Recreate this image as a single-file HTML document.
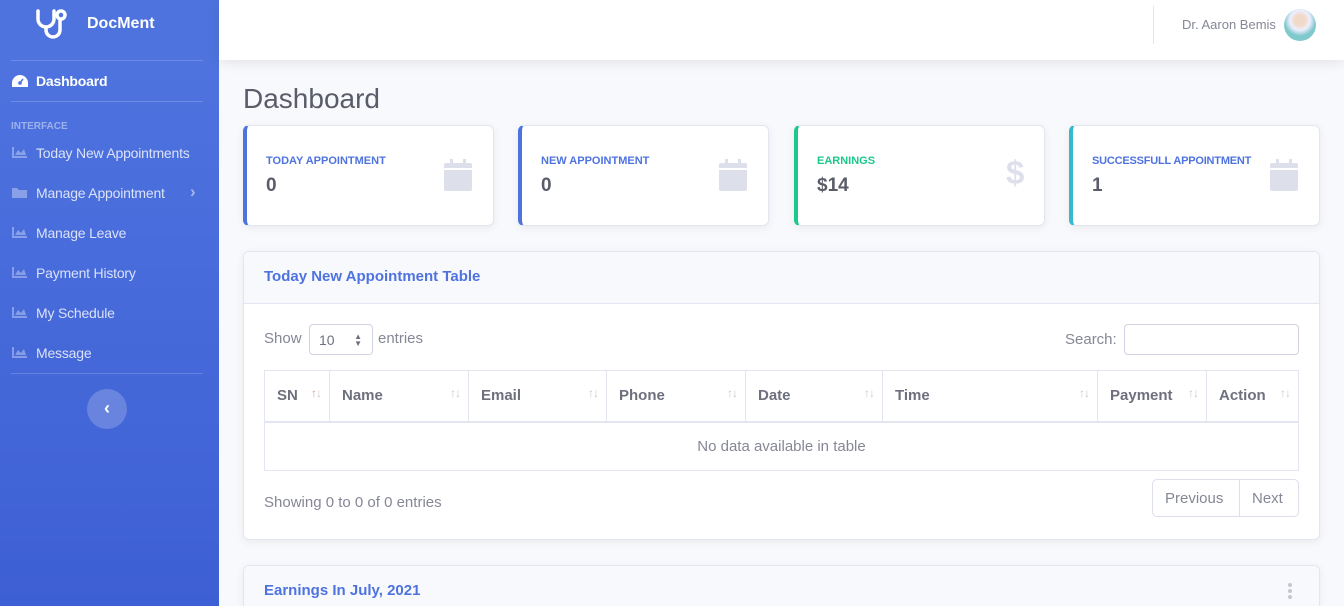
<!DOCTYPE html>
<html style="overflow:hidden;height:606px"><head><meta charset="utf-8"><style>
*{box-sizing:border-box;margin:0;padding:0}
body{width:1344px;height:606px;overflow:hidden;font-family:"Liberation Sans",sans-serif;background:#f8f9fc;position:relative;color:#858796}
.sb{position:absolute;left:0;top:0;width:219px;height:606px;background:linear-gradient(180deg,#4e73df 10%,#3d5fd4 100%)}
.a{position:absolute}
.hr{position:absolute;left:11px;width:192px;height:1px;background:rgba(255,255,255,.18)}
.it{position:absolute;left:36px;font-size:14px;color:rgba(255,255,255,.8);letter-spacing:-0.2px}
.ic{position:absolute;left:12px;width:15px;height:11px}
.top{position:absolute;left:219px;top:0;right:0;height:60px;background:#fff;box-shadow:0 2px 12px rgba(58,59,69,.12)}
.card{position:absolute;top:125px;width:251px;height:101px;background:#fff;border-radius:6px;border:1px solid #e3e6f0;box-shadow:0 2px 8px rgba(58,59,69,.08)}
.card .lab{position:absolute;left:19px;top:29px;font-size:11px;font-weight:bold;text-transform:uppercase}
.card .val{position:absolute;left:19px;top:49px;font-size:19px;font-weight:bold;color:#5a5c69}
.cal{position:absolute;left:197px;top:33px}
.box{position:absolute;left:243px;width:1077px;background:#fff;border:1px solid #e3e6f0;border-radius:6px;box-shadow:0 2px 8px rgba(58,59,69,.08);overflow:hidden}
.bh{height:52px;background:#f8f9fc;border-bottom:1px solid #e3e6f0;padding:16px 20px;font-size:15px;font-weight:bold;color:#4e73df}
th{font-size:15px;color:#6e707e;text-align:left;font-weight:bold;padding-left:12px;border-right:1px solid #e3e6f0;position:relative}
th span{position:absolute;right:8px;top:15px;font-size:12px;color:#c8cad4;font-weight:normal;letter-spacing:-1px}
</style></head><body>
<div class="sb">
 <svg class="a" style="left:35px;top:8px" width="36" height="32" viewBox="0 0 36 32" fill="none" stroke="#fff" stroke-width="3.5" stroke-linecap="round"><path d="M3 3v8a8 8 0 0 0 16 0V3"/><path d="M11 19v3a7 7 0 0 0 14 0V12"/><circle cx="26" cy="7" r="4"/></svg>
 <div class="a" style="left:87px;top:15px;font-size:16px;font-weight:bold;color:#fff">DocMent</div>
 <div class="hr" style="top:60px"></div>
 <svg class="a" style="left:12px;top:75px" width="16" height="12" viewBox="0 0 16 12"><path d="M8 0a8 8 0 0 0-8 8v4h16V8A8 8 0 0 0 8 0z" fill="#fff"/><circle cx="8" cy="8" r="1.8" fill="#4e73df"/><path d="M8 8l3-4" stroke="#4e73df" stroke-width="1.5"/></svg>
 <div class="it" style="top:73px;font-weight:bold;color:#fff">Dashboard</div>
 <div class="hr" style="top:101px"></div>
 <div class="a" style="left:11px;top:121px;font-size:10px;font-weight:bold;color:rgba(255,255,255,.45)">INTERFACE</div>
 <svg class="ic" style="top:147px" viewBox="0 0 15 11"><path d="M0 0h2v9h13v2H0zM3 8l3-5 3 3 3-4 2 6z" fill="rgba(255,255,255,.35)"/></svg>
 <div class="it" style="top:145px">Today New Appointments</div>
 <svg class="ic" style="top:187px" viewBox="0 0 15 11"><path d="M0 1h5l2 2h8v8H0z" fill="rgba(255,255,255,.35)"/></svg>
 <div class="it" style="top:185px">Manage Appointment</div>
 <div class="a" style="left:190px;top:182px;font-size:17px;font-weight:bold;color:rgba(255,255,255,.5)">&#8250;</div>
 <svg class="ic" style="top:227px" viewBox="0 0 15 11"><path d="M0 0h2v9h13v2H0zM3 8l3-5 3 3 3-4 2 6z" fill="rgba(255,255,255,.35)"/></svg>
 <div class="it" style="top:225px">Manage Leave</div>
 <svg class="ic" style="top:267px" viewBox="0 0 15 11"><path d="M0 0h2v9h13v2H0zM3 8l3-5 3 3 3-4 2 6z" fill="rgba(255,255,255,.35)"/></svg>
 <div class="it" style="top:265px">Payment History</div>
 <svg class="ic" style="top:307px" viewBox="0 0 15 11"><path d="M0 0h2v9h13v2H0zM3 8l3-5 3 3 3-4 2 6z" fill="rgba(255,255,255,.35)"/></svg>
 <div class="it" style="top:305px">My Schedule</div>
 <svg class="ic" style="top:347px" viewBox="0 0 15 11"><path d="M0 0h2v9h13v2H0zM3 8l3-5 3 3 3-4 2 6z" fill="rgba(255,255,255,.35)"/></svg>
 <div class="it" style="top:345px">Message</div>
 <div class="hr" style="top:373px"></div>
 <div class="a" style="left:87px;top:389px;width:40px;height:40px;border-radius:50%;background:rgba(255,255,255,.2);color:#fff;font-weight:bold;text-align:center;line-height:38px;font-size:18px">&#8249;</div>
</div>
<div class="top">
 <div class="a" style="left:934px;top:6px;width:1px;height:38px;background:#e3e6f0"></div>
 <div class="a" style="left:963px;top:17px;font-size:13px;color:#858796">Dr. Aaron Bemis</div>
 <div class="a" style="left:1065px;top:9px;width:32px;height:32px;border-radius:50%;background:radial-gradient(circle at 50% 35%,#f1d9c8 20%,#eef 38%,#7fc8cc 60%)"></div>
</div>
<div class="a" style="left:243px;top:83px;font-size:28px;color:#5a5c69">Dashboard</div>

<div class="card" style="left:243px;border-left:4px solid #4e73df"><div class="lab" style="color:#4e73df">Today Appointment</div><div class="val">0</div><svg class="cal" width="28" height="32" viewBox="0 0 28 32"><rect x="0" y="4" width="28" height="28" rx="2" fill="#dddfeb"/><rect x="0" y="9" width="28" height="2" fill="#fff"/><rect x="6" y="0" width="3" height="7" fill="#dddfeb"/><rect x="19" y="0" width="3" height="7" fill="#dddfeb"/></svg></div>
<div class="card" style="left:518px;border-left:4px solid #4e73df"><div class="lab" style="color:#4e73df">New Appointment</div><div class="val">0</div><svg class="cal" width="28" height="32" viewBox="0 0 28 32"><rect x="0" y="4" width="28" height="28" rx="2" fill="#dddfeb"/><rect x="0" y="9" width="28" height="2" fill="#fff"/><rect x="6" y="0" width="3" height="7" fill="#dddfeb"/><rect x="19" y="0" width="3" height="7" fill="#dddfeb"/></svg></div>
<div class="card" style="left:794px;border-left:4px solid #1cc88a"><div class="lab" style="color:#1cc88a">Earnings</div><div class="val">$14</div><div class="a" style="left:208px;top:28px;font-size:33px;font-weight:bold;color:#dddfeb">$</div></div>
<div class="card" style="left:1069px;border-left:4px solid #36b9cc"><div class="lab" style="color:#4e73df;letter-spacing:-0.2px">Successfull Appointment</div><div class="val">1</div><svg class="cal" width="28" height="32" viewBox="0 0 28 32"><rect x="0" y="4" width="28" height="28" rx="2" fill="#dddfeb"/><rect x="0" y="9" width="28" height="2" fill="#fff"/><rect x="6" y="0" width="3" height="7" fill="#dddfeb"/><rect x="19" y="0" width="3" height="7" fill="#dddfeb"/></svg></div>

<div class="box" style="top:251px;height:289px">
 <div class="bh">Today New Appointment Table</div>
 <div class="a" style="left:20px;top:78px;font-size:15px">Show</div>
 <div class="a" style="left:65px;top:72px;width:64px;height:31px;border:1px solid #d1d3e2;border-radius:4px;font-size:14px;color:#6e707e;padding:7px 9px">10<span style="position:absolute;right:10px;top:7px;font-size:8px">&#9650;</span><span style="position:absolute;right:10px;top:14px;font-size:8px">&#9660;</span></div>
 <div class="a" style="left:134px;top:78px;font-size:15px">entries</div>
 <div class="a" style="left:821px;top:79px;font-size:15px">Search:</div>
 <div class="a" style="left:880px;top:72px;width:175px;height:31px;border:1px solid #d1d3e2;border-radius:4px"></div>
 <table class="a" style="left:20px;top:118px;width:1035px;border-collapse:collapse;border:1px solid #e3e6f0">
  <tr style="height:51px;border-bottom:2px solid #e3e6f0"><th style="width:65px">SN<span style="right:8px"><b style="color:#e8a07a;font-weight:normal">&#8593;</b>&#8595;</span></th><th style="width:139px">Name<span>&#8593;&#8595;</span></th><th style="width:138px">Email<span>&#8593;&#8595;</span></th><th style="width:139px">Phone<span>&#8593;&#8595;</span></th><th style="width:137px">Date<span>&#8593;&#8595;</span></th><th style="width:215px">Time<span>&#8593;&#8595;</span></th><th style="width:109px">Payment<span>&#8593;&#8595;</span></th><th>Action<span>&#8593;&#8595;</span></th></tr>
  <tr style="height:49px"><td colspan="8" style="text-align:center;font-size:15px">No data available in table</td></tr>
 </table>
 <div class="a" style="left:20px;top:242px;font-size:15px">Showing 0 to 0 of 0 entries</div>
 <div class="a" style="left:908px;top:227px;width:147px;height:38px;border:1px solid #dddfeb;border-radius:5px;font-size:15px;color:#858796">
  <div class="a" style="left:12px;top:10px">Previous</div>
  <div class="a" style="left:86px;top:0;width:1px;height:36px;background:#dddfeb"></div>
  <div class="a" style="left:99px;top:10px">Next</div>
 </div>
</div>
<div class="box" style="top:565px;height:41px;border-bottom:none;border-radius:6px 6px 0 0">
 <div class="bh" style="border:none;height:41px">Earnings In July, 2021</div>
 <div class="a" style="left:1044px;top:17px;width:4px;font-size:0">
  <div style="width:4px;height:4px;border-radius:2px;background:#c4c6d0;margin-bottom:2px"></div><div style="width:4px;height:4px;border-radius:2px;background:#c4c6d0;margin-bottom:2px"></div><div style="width:4px;height:4px;border-radius:2px;background:#c4c6d0"></div>
 </div>
</div>
</body></html>
